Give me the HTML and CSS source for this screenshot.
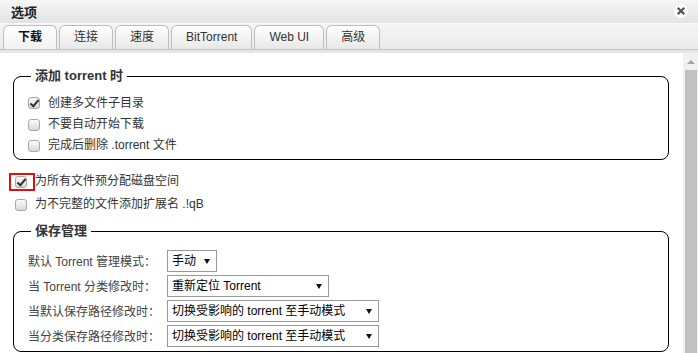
FILE: index.html
```html
<!DOCTYPE html>
<html lang="zh">
<head>
    <meta charset="UTF-8">
    <title>选项</title>
    <link rel="stylesheet" href="styles.css">
</head>
<body>
    <div class="dialog">
        <div class="titlebar">
            <span class="title">选项</span>
            <span class="close">
                <svg width="14" height="14" viewBox="0 0 14 14">
                    <circle cx="7" cy="7" r="7" fill="#fff"/>
                    <path d="M4.5 4.5 L9.5 9.5 M9.5 4.5 L4.5 9.5" stroke="#555" stroke-width="2.2" stroke-linecap="square"/>
                </svg>
            </span>
        </div>

        <ul class="tabs">
            <li class="tab active">下载</li>
            <li class="tab">连接</li>
            <li class="tab">速度</li>
            <li class="tab">BitTorrent</li>
            <li class="tab">Web UI</li>
            <li class="tab">高级</li>
        </ul>

        <div class="panel">
            <div class="content">
                <fieldset class="group group-add">
                    <legend>添加 torrent 时</legend>
                    <label class="check"><input type="checkbox" checked>创建多文件子目录</label>
                    <label class="check"><input type="checkbox">不要自动开始下载</label>
                    <label class="check"><input type="checkbox">完成后删除 .torrent 文件</label>
                </fieldset>

                <label class="check outer">
                    <span class="mark-wrap"><input type="checkbox" checked><span class="highlight"></span></span>为所有文件预分配磁盘空间
                </label>
                <label class="check outer"><input type="checkbox">为不完整的文件添加扩展名 .!qB</label>

                <fieldset class="group group-save">
                    <legend>保存管理</legend>
                    <div class="form-row">
                        <span class="form-label">默认 Torrent 管理模式：</span>
                        <span class="select sel-short">
                            <select><option>手动</option><option>自动</option></select>
                        </span>
                    </div>
                    <div class="form-row">
                        <span class="form-label">当 Torrent 分类修改时：</span>
                        <span class="select sel-mid">
                            <select><option>重新定位 Torrent</option></select>
                        </span>
                    </div>
                    <div class="form-row">
                        <span class="form-label">当默认保存路径修改时：</span>
                        <span class="select sel-long">
                            <select><option>切换受影响的 torrent 至手动模式</option></select>
                        </span>
                    </div>
                    <div class="form-row">
                        <span class="form-label">当分类保存路径修改时：</span>
                        <span class="select sel-long">
                            <select><option>切换受影响的 torrent 至手动模式</option></select>
                        </span>
                    </div>
                </fieldset>
            </div>

            <div class="scrollbar">
                <div class="scroll-arrow"></div>
                <div class="scroll-thumb"></div>
            </div>
        </div>
    </div>
</body>
</html>
```

FILE: styles.css
```css
body {
    margin: 0;
    font-family: 'Liberation Sans', 'Noto Sans CJK SC', sans-serif;
    font-size: 12px;
    color: #333;
    background-color: #fff;
}

.dialog {
    width: 698px;
    height: 353px;
    overflow: hidden;
    display: flex;
    flex-direction: column;
}

/* title bar */
.titlebar {
    height: 23px;
    border-bottom: 1px solid #fafafa;
    background: linear-gradient(#f6f6f6, #e3e3e3);
    display: flex;
    align-items: center;
    justify-content: space-between;
    padding: 0 10px 0 11px;
}

.title {
    font-weight: bold;
    font-size: 13px;
    color: #222;
}

.close {
    display: flex;
    margin-top: -1px;
}

/* tabs */
.tabs {
    list-style: none;
    margin: 0;
    padding: 1px 0 0 3px;
    height: 24px;
    display: flex;
    gap: 2px;
    background: linear-gradient(#f4f4f4, #ebebeb);
    border-bottom: 1px solid #c4c4c4;
    box-shadow: 0 3px 0 #e6e6e6;
    margin-bottom: 3px;
}

.tab {
    padding: 0 14px;
    height: 23px;
    line-height: 23px;
    border: 1px solid #bdbdbd;
    border-bottom: none;
    border-radius: 6px 6px 0 0;
    background: linear-gradient(#ffffff, #e8e8e8);
    color: #333;
}

.tab.active {
    font-weight: bold;
    color: #111;
    background: linear-gradient(#ffffff, #f2f2f2);
}

/* body */
.panel {
    flex: 1;
    display: flex;
    background-color: #fff;
}

.content {
    flex: 1;
    padding: 15px 14px 0 13px;
    overflow: hidden;
}

.group {
    margin: 0;
    padding: 8px 14px 3px 14px;
    border: 1px solid #000;
    border-radius: 8px;
}

.group legend {
    margin-left: 3px;
    padding: 0 4px;
    font-weight: bold;
    font-size: 13px;
    line-height: 16px;
    color: #333;
}

.group-save {
    margin-top: 7px;
    padding-top: 9px;
}

.check {
    display: flex;
    align-items: center;
    gap: 8px;
    height: 21px;
    line-height: 21px;
}

.check:first-of-type {
    height: 22px;
}

.check.outer {
    margin-left: 2px;
    height: 23px;
}

.group-add + .check.outer {
    margin-top: 10px;
}

.check input {
    appearance: none;
    -webkit-appearance: none;
    margin: 0;
    width: 12px;
    height: 12px;
    border: 1px solid #a8a8a8;
    border-radius: 3px;
    background: linear-gradient(#fbfbfb, #d9d9d9);
    position: relative;
    flex: none;
}

.check input:checked::after {
    content: '';
    position: absolute;
    left: 3px;
    top: 0px;
    width: 3px;
    height: 7px;
    border-right: 2px solid #333;
    border-bottom: 2px solid #333;
    transform: rotate(40deg);
}

.mark-wrap {
    position: relative;
    display: flex;
}

.highlight {
    position: absolute;
    left: -6px;
    top: -3px;
    width: 26px;
    height: 18px;
    border: 2px solid #e01010;
    box-sizing: border-box;
}

/* save management rows */
.form-row {
    display: grid;
    grid-template-columns: 139px auto;
    justify-items: start;
    align-items: center;
    height: 25px;
}

.form-label {
    color: #444;
}

.select {
    position: relative;
    display: inline-block;
}

.select select {
    appearance: none;
    -webkit-appearance: none;
    height: 22px;
    padding: 0 0 0 4px;
    border: 1px solid #999;
    border-radius: 0;
    background-color: #fff;
    font-family: 'Liberation Sans', 'Noto Sans CJK SC', sans-serif;
    font-size: 12px;
    color: #000;
    width: 100%;
}

.select::after {
    content: '';
    position: absolute;
    right: 7px;
    top: 9px;
    border-left: 3px solid transparent;
    border-right: 3px solid transparent;
    border-top: 5px solid #111;
}

.sel-short {
    width: 50px;
}

.sel-mid {
    width: 162px;
}

.sel-long {
    width: 212px;
}

/* scrollbar */
.scrollbar {
    width: 15px;
    background-color: #f1f1f1;
    display: flex;
    flex-direction: column;
}

.scroll-arrow {
    height: 17px;
    position: relative;
}

.scroll-arrow::after {
    content: '';
    position: absolute;
    left: 4px;
    top: 7px;
    border-left: 4px solid transparent;
    border-right: 4px solid transparent;
    border-bottom: 4px solid #a3a3a3;
}

.scroll-thumb {
    flex: 1;
    margin: 0 1px 0 2px;
    background-color: #c1c1c1;
}
```
